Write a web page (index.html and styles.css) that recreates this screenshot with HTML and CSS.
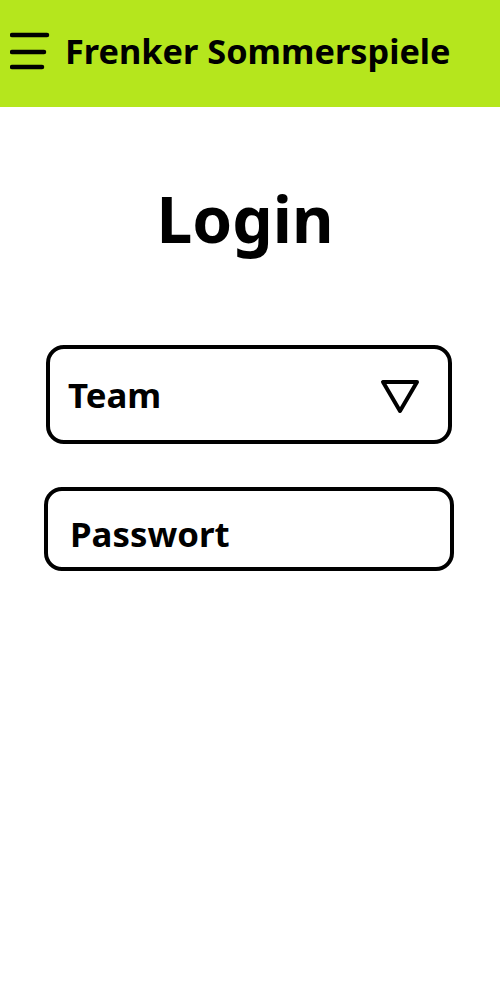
FILE: index.html
```html
<!DOCTYPE html>
<html lang="de">
<head>
<meta charset="utf-8">
<title>Login</title>
<link rel="stylesheet" href="styles.css">
</head>
<body>
<header class="topbar">
  <svg class="menu" width="40" height="40" viewBox="0 0 40 40">
    <line x1="2" y1="4" x2="37" y2="4" />
    <line x1="2" y1="21" x2="34" y2="21" />
    <line x1="2" y1="36" x2="32" y2="36" />
  </svg>
  <h1 class="brand">Frenker Sommerspiele</h1>
</header>
<main class="content">
  <h2 class="title">Login</h2>
  <div class="field field-team">
    <span class="label">Team</span>
    <svg class="caret" width="40" height="34" viewBox="0 0 40 34">
      <polygon points="3,2 37,2 20,31" />
    </svg>
  </div>
  <div class="field field-pass">
    <span class="label">Passwort</span>
  </div>
</main>
</body>
</html>
```
FILE: styles.css
```css
body {
  margin: 0;
  font-family: "Noto Sans", "DejaVu Sans", sans-serif;
  color: #000;
  background: #fff;
}
.topbar {
  height: 107px;
  background: #b5e61d;
  display: flex;
  align-items: center;
  padding-left: 10px;
}
.menu {
  width: 40px;
  height: 40px;
  flex: none;
  align-self: flex-start;
  margin-top: 31px;
}
.menu line {
  stroke: #000;
  stroke-width: 4.5;
  stroke-linecap: round;
}
.brand {
  margin: 0 0 4px 15px;
  font-size: 34.3px;
  font-weight: 700;
  line-height: 1;
}
.content {
  display: flex;
  flex-direction: column;
}
.title {
  margin: 80px 0 0;
  text-align: center;
  font-size: 64px;
  font-weight: 700;
  line-height: 1;
  padding-right: 10px;
}
.field {
  box-sizing: border-box;
  border: 4px solid #000;
  border-radius: 18px;
  display: flex;
  align-items: center;
}
.label {
  font-size: 34.8px;
  font-weight: 700;
}
.field-team {
  margin: 94px 0 0 46px;
  width: 406px;
  height: 99px;
  padding: 0 28px 0 18px;
  justify-content: space-between;
}
.caret {
  width: 40px;
  height: 34px;
  flex: none;
  margin-top: 4px;
}
.caret polygon {
  fill: none;
  stroke: #000;
  stroke-width: 4;
  stroke-linejoin: round;
}
.field-pass {
  margin: 43px 0 0 44px;
  width: 410px;
  height: 84px;
  padding: 8px 22px 0 22px;
}
```
